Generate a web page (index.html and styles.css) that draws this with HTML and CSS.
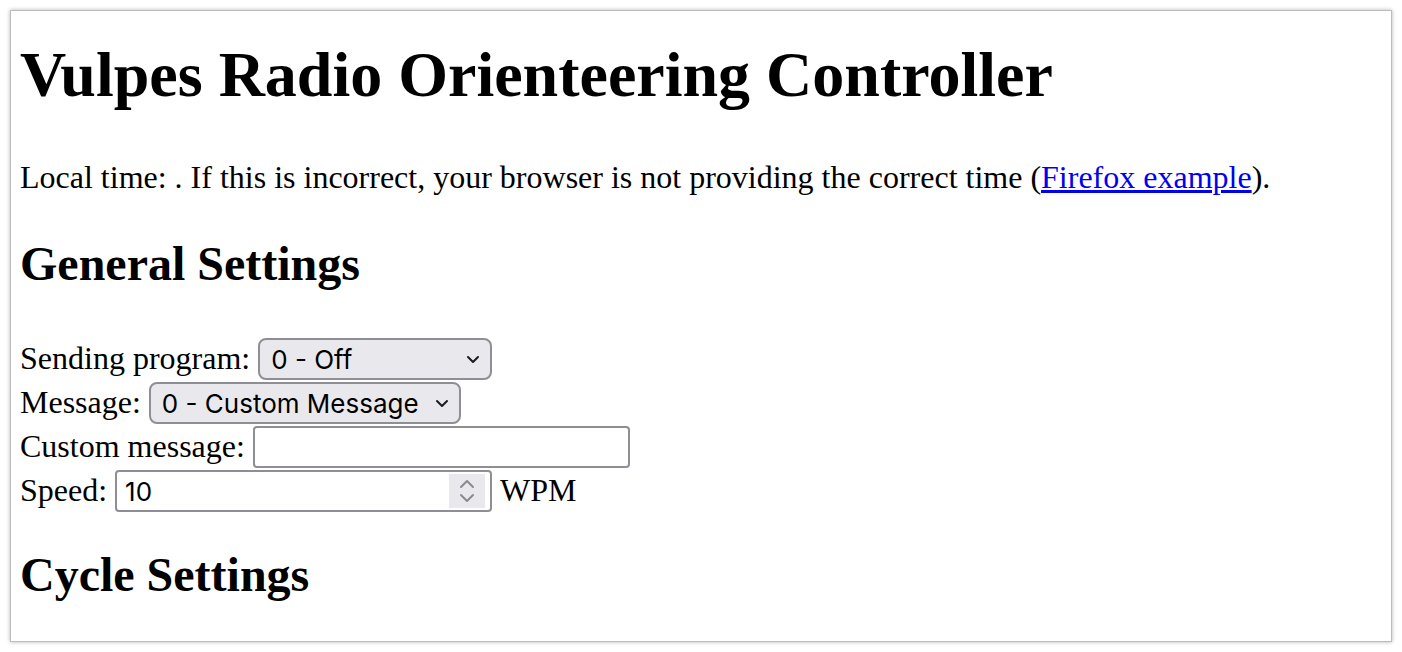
FILE: index.html
```html
<!DOCTYPE html>
<html lang="en">
<head>
<meta charset="utf-8">
<title>Vulpes Radio Orienteering Controller</title>
<link rel="stylesheet" href="styles.css">
</head>
<body>
<div class="frame">
  <h1 class="title">Vulpes Radio Orienteering Controller</h1>
  <p class="time">Local time: <span class="clock"></span>. If this is incorrect, your browser is not providing the correct time (<a href="#" class="link">Firefox example</a>).</p>
  <h2 class="section general">General Settings</h2>
  <form class="settings">
    <div class="row">
      <label class="label" for="program">Sending program:</label>
      <span class="select-wrap">
        <select id="program" class="select select-program">
          <option>0 - Off</option>
          <option>1 - Continuous</option>
          <option>2 - Cycle</option>
        </select>
        <svg class="chev" width="14" height="10" viewBox="0 0 14 10"><path d="M2 3 L7 8 L12 3" fill="none" stroke="#1c1c1e" stroke-width="2" stroke-linecap="round" stroke-linejoin="round"/></svg>
      </span>
    </div>
    <div class="row">
      <label class="label" for="message">Message:</label>
      <span class="select-wrap">
        <select id="message" class="select select-message">
          <option>0 - Custom Message</option>
          <option>1 - MO</option>
          <option>2 - MOE</option>
        </select>
        <svg class="chev" width="14" height="10" viewBox="0 0 14 10"><path d="M2 3 L7 8 L12 3" fill="none" stroke="#1c1c1e" stroke-width="2" stroke-linecap="round" stroke-linejoin="round"/></svg>
      </span>
    </div>
    <div class="row">
      <label class="label" for="custom">Custom message:</label>
      <input id="custom" class="text-input" type="text">
    </div>
    <div class="row">
      <label class="label" for="speed">Speed:</label>
      <span class="number-wrap">
        <input id="speed" class="text-input number-input" type="number" value="10">
        <span class="spinner">
          <svg width="18" height="30" viewBox="0 0 18 30"><path d="M3 11 L9 5 L15 11" fill="none" stroke="#8a8a8f" stroke-width="2" stroke-linecap="round" stroke-linejoin="round"/><path d="M3 19 L9 25 L15 19" fill="none" stroke="#8a8a8f" stroke-width="2" stroke-linecap="round" stroke-linejoin="round"/></svg>
        </span>
      </span>
      <span class="unit">WPM</span>
    </div>
  </form>
  <h2 class="section cycle">Cycle Settings</h2>
</div>
</body>
</html>
```
FILE: styles.css
```css
html, body {
  margin: 0;
  padding: 0;
  background: #ffffff;
}

body {
  font-family: "Liberation Serif", "Times New Roman", serif;
  font-size: 32px;
  color: #000000;
  padding: 10px;
  height: 652px;
  box-sizing: border-box;
  overflow: hidden;
}

.frame {
  height: 632px;
  box-sizing: border-box;
  border: 1px solid #bdbdbd;
  box-shadow: 0 0 4px rgba(0, 0, 0, 0.3);
  padding: 0 9px;
  overflow: hidden;
  background: #ffffff;
}

.title {
  font-size: 64px;
  font-weight: bold;
  margin: 27px 0 47px;
}

.time {
  margin: 0;
}

.link {
  color: #0000ee;
  text-decoration: underline;
}

.section {
  font-size: 48px;
  font-weight: bold;
}

.general {
  margin: 40px 0 46px;
}

.cycle {
  margin: 34px 0 0;
}

.settings {
  margin: 0;
}

.row {
  display: flex;
  align-items: baseline;
  gap: 8px;
  height: 44px;
}

.label {
  white-space: nowrap;
}

.select-wrap,
.number-wrap {
  position: relative;
  display: inline-flex;
  margin: 1px 0;
}

.select {
  -webkit-appearance: none;
  appearance: none;
  height: 42px;
  box-sizing: border-box;
  border: 2px solid #8e8e96;
  border-radius: 8px;
  background: #e9e9ed;
  font-family: Inter, "Noto Sans", sans-serif;
  font-size: 26px;
  color: #000000;
  padding: 0 30px 0 11px;
  margin: 0;
}

.select-program {
  width: 234px;
}

.select-message {
  width: 312px;
}

.chev {
  position: absolute;
  right: 12px;
  top: 16px;
  pointer-events: none;
}

.text-input {
  -webkit-appearance: none;
  appearance: none;
  width: 377px;
  height: 42px;
  box-sizing: border-box;
  border: 2px solid #8e8e96;
  border-radius: 4px;
  background: #ffffff;
  font-family: Inter, "Noto Sans", sans-serif;
  font-size: 26px;
  color: #000000;
  padding: 0 8px;
  margin: 1px 0;
}

.number-input {
  -moz-appearance: textfield;
  margin: 0;
}

.number-input::-webkit-inner-spin-button,
.number-input::-webkit-outer-spin-button {
  -webkit-appearance: none;
  margin: 0;
}

.spinner {
  position: absolute;
  right: 7px;
  top: 4px;
  width: 36px;
  height: 34px;
  background: #e8e8ed;
  display: flex;
  align-items: center;
  justify-content: center;
}

.unit {
  white-space: nowrap;
}
```
